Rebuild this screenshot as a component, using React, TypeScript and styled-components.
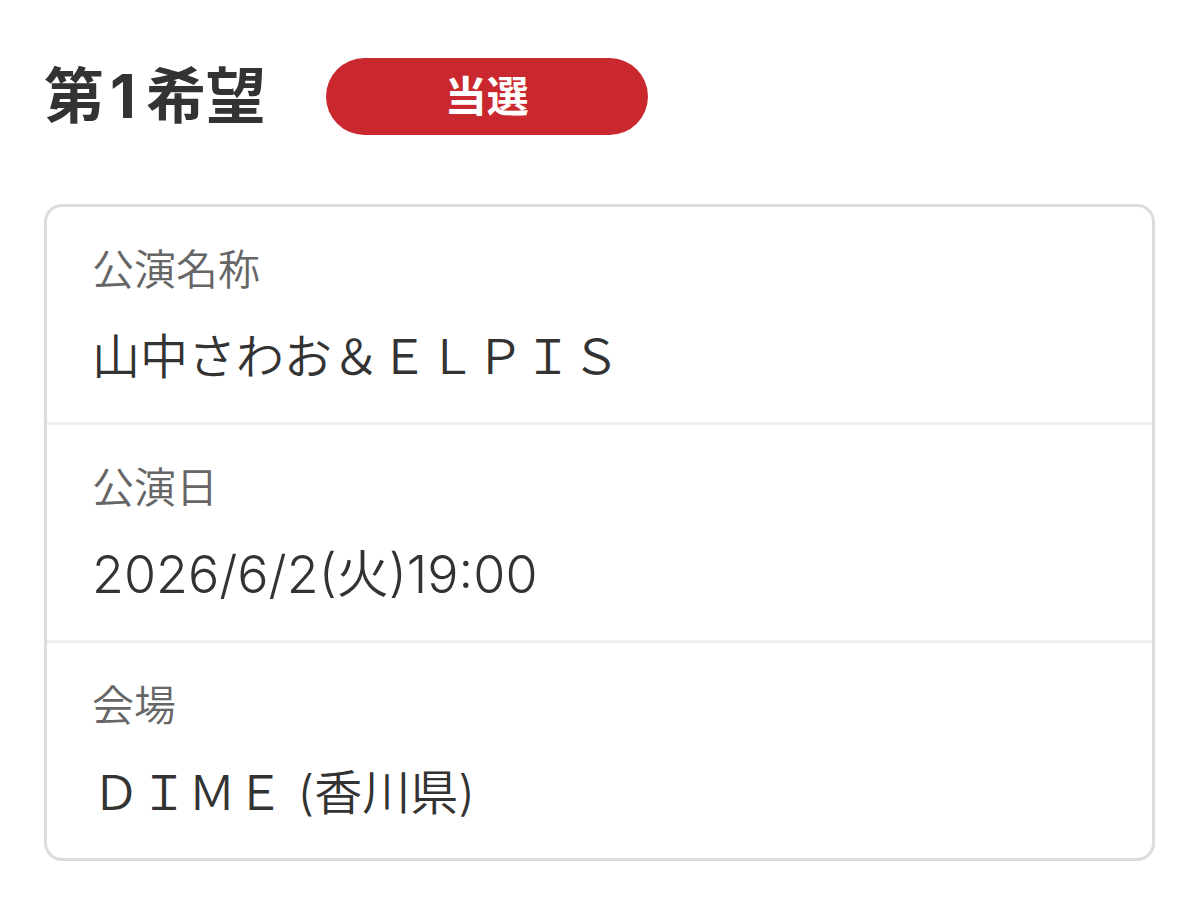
import React from 'react';
import styled, { createGlobalStyle } from 'styled-components';

const GlobalStyle = createGlobalStyle`
  * { box-sizing: border-box; }
  body {
    margin: 0;
    background: #fff;
    color: #333;
    font-family: Inter, "Noto Sans CJK JP", sans-serif;
  }
`;

const Page = styled.main`
  padding: 58px 45px 58px 44px;
`;

const Header = styled.header`
  display: flex;
  align-items: flex-start;
  gap: 60px;
  margin-bottom: 69px;
`;

const Title = styled.h1`
  margin: 0;
  font-size: 60px;
  line-height: 76px;
  font-weight: 700;
`;

const Rank = styled.span`
  margin: 0 10px 0 6px;
`;

const Badge = styled.span`
  width: 322px;
  border-radius: 40px;
  background: #c9292e;
  color: #fff;
  font-size: 42px;
  line-height: 77px;
  font-weight: 700;
  text-align: center;
`;

const Card = styled.dl`
  margin: 0;
  border: 3px solid #dcdcdc;
  border-radius: 18px;
`;

const Row = styled.div`
  padding: 33px 45px 30px;

  & + & {
    border-top: 3px solid #eee;
  }
`;

const Label = styled.dt`
  color: #666;
  font-size: 42px;
  font-weight: 350;
  line-height: 60px;
`;

const Value = styled.dd<{ $numeric?: boolean }>`
  margin: 22px 0 0;
  font-size: ${({ $numeric }) => ($numeric ? 52 : 48)}px;
  font-weight: 350;
  line-height: 70px;
`;

const details = [
  { label: '公演名称', value: '山中さわお＆ＥＬＰＩＳ' },
  { label: '公演日', value: '2026/6/2(火)19:00', numeric: true },
  { label: '会場', value: 'ＤＩＭＥ (香川県)' },
];

export default function App() {
  return (
    <>
      <GlobalStyle />
      <Page lang="ja">
        <Header>
          <Title>第<Rank>1</Rank>希望</Title>
          <Badge>当選</Badge>
        </Header>
        <Card>
          {details.map(({ label, value, numeric }) => (
            <Row key={label}>
              <Label>{label}</Label>
              <Value $numeric={numeric}>{value}</Value>
            </Row>
          ))}
        </Card>
      </Page>
    </>
  );
}
